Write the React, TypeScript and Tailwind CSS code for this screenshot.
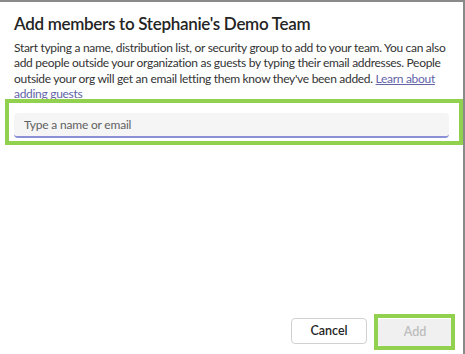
import { useState } from 'react';

const font = { fontFamily: 'Lato, "Liberation Sans", sans-serif' };

const App = (): JSX.Element => {
  const [value, setValue] = useState('');

  return (
    <div
      className="flex h-[354px] w-[465px] flex-col border-t-2 border-r-2 border-[#8a8a8a] bg-white text-[#242424]"
      style={font}
    >
      <div className="px-[14px] pt-[11px]">
        <h1 className="whitespace-nowrap text-[17px] font-semibold leading-[22px] tracking-[-0.3px]">
          Add members to Stephanie's Demo Team
        </h1>
        <p className="mt-[5px] whitespace-nowrap text-[12px] leading-[15.3px] tracking-[-0.3px] text-[#333]">
          Start typing a name, distribution list, or security group to add to your team. You can also
          <br />
          add people outside your organization as guests by typing their email addresses. People
          <br />
          outside your org will get an email letting them know they've been added.{' '}
          <a href="#" className="text-[#6264a7] underline">
            Learn about
            <br />
            adding guests
          </a>
        </p>
        <div className="relative mt-[10px]">
          <input
            autoFocus
            value={value}
            onChange={(e) => setValue(e.target.value)}
            placeholder="Type a name or email"
            className="h-[25px] w-full rounded-[4px] border-b-2 border-[#8b8fd6] bg-[#f5f5f5] px-[10px] text-[12px] tracking-[-0.2px] text-[#242424] caret-black outline-none placeholder:text-[#616161]"
            style={font}
          />
          <div className="pointer-events-none absolute -left-[9px] -right-[14px] -top-[12px] -bottom-[7px] border-[4px] border-[#92d050]" />
        </div>
      </div>

      <div className="mt-auto flex justify-end gap-[11px] pr-[11px] pb-[8px]">
        <button className="h-[26px] w-[76px] rounded-[4px] border border-[#d1d1d1] bg-white text-[12.5px] font-semibold text-[#242424]">
          Cancel
        </button>
        <div className="relative">
          <button
            disabled
            className="h-[27px] w-[74px] rounded-[4px] bg-[#f0f0f0] text-[12.5px] font-semibold text-[#bdbdbd]"
          >
            Add
          </button>
          <div className="pointer-events-none absolute -left-[4px] -right-[3px] -top-[4px] -bottom-[4px] border-[4px] border-[#92d050]" />
        </div>
      </div>
    </div>
  );
};

export default App;
